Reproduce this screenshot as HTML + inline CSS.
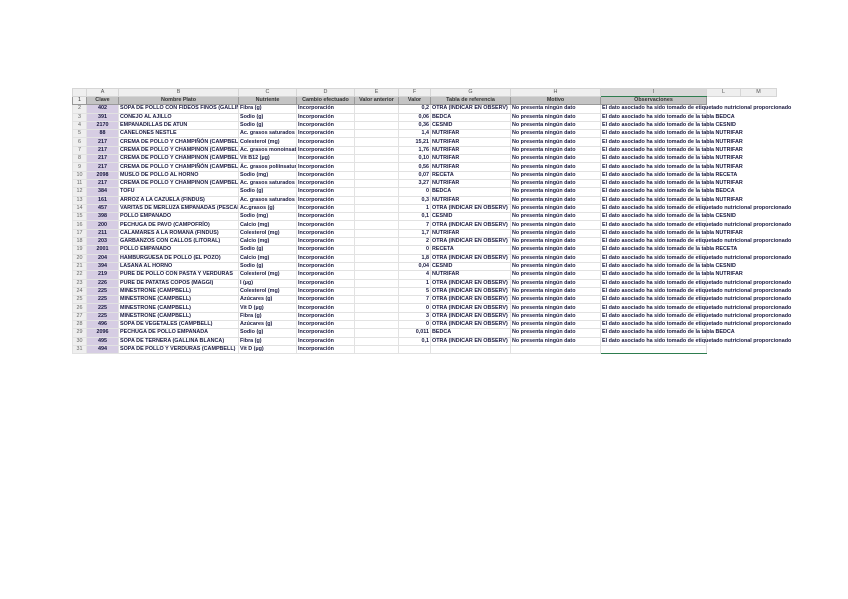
<!DOCTYPE html>
<html><head><meta charset="utf-8"><style>
html,body{margin:0;padding:0;background:#fff;width:848px;height:599px;overflow:hidden}
table{position:absolute;left:72px;top:88px;border-collapse:collapse;table-layout:fixed;font-family:"Liberation Sans",sans-serif;font-size:5.4px;color:#1a1a40;width:704px}
td{padding:0 1px;height:7.3px;line-height:7px;border:1px solid #e2e2e2;white-space:nowrap;overflow:hidden;font-weight:bold}
tr.l td{background:#efefef;color:#555;text-align:center;height:6px;font-weight:normal;border-color:#d6d6d6}
tr.h td{background:#c4c4c4;text-align:center;border-color:#999;color:#333}
td.n{background:#efefef;color:#666;text-align:center;font-weight:normal}
td.a{background:#d6cde3;text-align:center}
td.r{text-align:right}
tr.h td.sel{border-top:1px solid #2e7d4f}
tr.h td.n{background:#efefef}
tr.h td.x{background:#fff;border-color:#fff}
td.x{border-color:#fff}
tr:not(.l):not(.h) td:nth-child(10){overflow:visible}
</style></head><body>
<table>
<colgroup><col style="width:14px"><col style="width:32px"><col style="width:120px"><col style="width:58px"><col style="width:58px"><col style="width:44px"><col style="width:32px"><col style="width:80px"><col style="width:90px"><col style="width:106px"><col style="width:34px"><col style="width:36px"></colgroup>
<tr class="l"><td></td><td>A</td><td>B</td><td>C</td><td>D</td><td>E</td><td>F</td><td>G</td><td>H</td><td style="background:#d9d9d9;border-bottom:1px solid #2e7d4f">I</td><td>L</td><td>M</td></tr>
<tr class="h"><td class="n">1</td><td>Clave</td><td>Nombre Plato</td><td>Nutriente</td><td>Cambio efectuado</td><td>Valor anterior</td><td>Valor</td><td>Tabla de referencia</td><td>Motivo</td><td class="sel">Observaciones</td><td class="x"></td><td class="x"></td></tr>
<tr><td class="n">2</td><td class="a">402</td><td>SOPA DE POLLO CON FIDEOS FINOS (GALLINA BLANCA)</td><td>Fibra (g)</td><td>Incorporación</td><td></td><td class="r">0,2</td><td>OTRA (INDICAR EN OBSERV)</td><td>No presenta ningún dato</td><td>El dato asociado ha sido tomado de etiquetado nutricional proporcionado</td><td class="x"></td><td class="x"></td></tr>
<tr><td class="n">3</td><td class="a">391</td><td>CONEJO AL AJILLO</td><td>Sodio (g)</td><td>Incorporación</td><td></td><td class="r">0,06</td><td>BEDCA</td><td>No presenta ningún dato</td><td>El dato asociado ha sido tomado de la tabla BEDCA</td><td class="x"></td><td class="x"></td></tr>
<tr><td class="n">4</td><td class="a">2170</td><td>EMPANADILLAS DE ATÚN</td><td>Sodio (g)</td><td>Incorporación</td><td></td><td class="r">0,36</td><td>CESNID</td><td>No presenta ningún dato</td><td>El dato asociado ha sido tomado de la tabla CESNID</td><td class="x"></td><td class="x"></td></tr>
<tr><td class="n">5</td><td class="a">88</td><td>CANELONES NESTLÉ</td><td>Ác. grasos saturados (g)</td><td>Incorporación</td><td></td><td class="r">1,4</td><td>NUTRIFAR</td><td>No presenta ningún dato</td><td>El dato asociado ha sido tomado de la tabla NUTRIFAR</td><td class="x"></td><td class="x"></td></tr>
<tr><td class="n">6</td><td class="a">217</td><td>CREMA DE POLLO Y CHAMPIÑÓN (CAMPBELL)</td><td>Colesterol (mg)</td><td>Incorporación</td><td></td><td class="r">15,21</td><td>NUTRIFAR</td><td>No presenta ningún dato</td><td>El dato asociado ha sido tomado de la tabla NUTRIFAR</td><td class="x"></td><td class="x"></td></tr>
<tr><td class="n">7</td><td class="a">217</td><td>CREMA DE POLLO Y CHAMPIÑÓN (CAMPBELL)</td><td>Ác. grasos monoinsaturados</td><td>Incorporación</td><td></td><td class="r">1,76</td><td>NUTRIFAR</td><td>No presenta ningún dato</td><td>El dato asociado ha sido tomado de la tabla NUTRIFAR</td><td class="x"></td><td class="x"></td></tr>
<tr><td class="n">8</td><td class="a">217</td><td>CREMA DE POLLO Y CHAMPIÑÓN (CAMPBELL)</td><td>Vit B12 (µg)</td><td>Incorporación</td><td></td><td class="r">0,10</td><td>NUTRIFAR</td><td>No presenta ningún dato</td><td>El dato asociado ha sido tomado de la tabla NUTRIFAR</td><td class="x"></td><td class="x"></td></tr>
<tr><td class="n">9</td><td class="a">217</td><td>CREMA DE POLLO Y CHAMPIÑÓN (CAMPBELL)</td><td>Ác. grasos poliinsaturados</td><td>Incorporación</td><td></td><td class="r">0,56</td><td>NUTRIFAR</td><td>No presenta ningún dato</td><td>El dato asociado ha sido tomado de la tabla NUTRIFAR</td><td class="x"></td><td class="x"></td></tr>
<tr><td class="n">10</td><td class="a">2098</td><td>MUSLO DE POLLO AL HORNO</td><td>Sodio (mg)</td><td>Incorporación</td><td></td><td class="r">0,07</td><td>RECETA</td><td>No presenta ningún dato</td><td>El dato asociado ha sido tomado de la tabla RECETA</td><td class="x"></td><td class="x"></td></tr>
<tr><td class="n">11</td><td class="a">217</td><td>CREMA DE POLLO Y CHAMPIÑÓN (CAMPBELL)</td><td>Ác. grasos saturados (g)</td><td>Incorporación</td><td></td><td class="r">3,27</td><td>NUTRIFAR</td><td>No presenta ningún dato</td><td>El dato asociado ha sido tomado de la tabla NUTRIFAR</td><td class="x"></td><td class="x"></td></tr>
<tr><td class="n">12</td><td class="a">384</td><td>TOFU</td><td>Sodio (g)</td><td>Incorporación</td><td></td><td class="r">0</td><td>BEDCA</td><td>No presenta ningún dato</td><td>El dato asociado ha sido tomado de la tabla BEDCA</td><td class="x"></td><td class="x"></td></tr>
<tr><td class="n">13</td><td class="a">161</td><td>ARROZ A LA CAZUELA (FINDUS)</td><td>Ác. grasos saturados (g)</td><td>Incorporación</td><td></td><td class="r">0,3</td><td>NUTRIFAR</td><td>No presenta ningún dato</td><td>El dato asociado ha sido tomado de la tabla NUTRIFAR</td><td class="x"></td><td class="x"></td></tr>
<tr><td class="n">14</td><td class="a">457</td><td>VARITAS DE MERLUZA EMPANADAS (PESCANOVA)</td><td>Ác.grasos (g)</td><td>Incorporación</td><td></td><td class="r">1</td><td>OTRA (INDICAR EN OBSERV)</td><td>No presenta ningún dato</td><td>El dato asociado ha sido tomado de etiquetado nutricional proporcionado</td><td class="x"></td><td class="x"></td></tr>
<tr><td class="n">15</td><td class="a">398</td><td>POLLO EMPANADO</td><td>Sodio (mg)</td><td>Incorporación</td><td></td><td class="r">0,1</td><td>CESNID</td><td>No presenta ningún dato</td><td>El dato asociado ha sido tomado de la tabla CESNID</td><td class="x"></td><td class="x"></td></tr>
<tr><td class="n">16</td><td class="a">200</td><td>PECHUGA DE PAVO (CAMPOFRÍO)</td><td>Calcio (mg)</td><td>Incorporación</td><td></td><td class="r">7</td><td>OTRA (INDICAR EN OBSERV)</td><td>No presenta ningún dato</td><td>El dato asociado ha sido tomado de etiquetado nutricional proporcionado</td><td class="x"></td><td class="x"></td></tr>
<tr><td class="n">17</td><td class="a">211</td><td>CALAMARES A LA ROMANA (FINDUS)</td><td>Colesterol (mg)</td><td>Incorporación</td><td></td><td class="r">1,7</td><td>NUTRIFAR</td><td>No presenta ningún dato</td><td>El dato asociado ha sido tomado de la tabla NUTRIFAR</td><td class="x"></td><td class="x"></td></tr>
<tr><td class="n">18</td><td class="a">203</td><td>GARBANZOS CON CALLOS (LITORAL)</td><td>Calcio (mg)</td><td>Incorporación</td><td></td><td class="r">2</td><td>OTRA (INDICAR EN OBSERV)</td><td>No presenta ningún dato</td><td>El dato asociado ha sido tomado de etiquetado nutricional proporcionado</td><td class="x"></td><td class="x"></td></tr>
<tr><td class="n">19</td><td class="a">2001</td><td>POLLO EMPANADO</td><td>Sodio (g)</td><td>Incorporación</td><td></td><td class="r">0</td><td>RECETA</td><td>No presenta ningún dato</td><td>El dato asociado ha sido tomado de la tabla RECETA</td><td class="x"></td><td class="x"></td></tr>
<tr><td class="n">20</td><td class="a">204</td><td>HAMBURGUESA DE POLLO (EL POZO)</td><td>Calcio (mg)</td><td>Incorporación</td><td></td><td class="r">1,8</td><td>OTRA (INDICAR EN OBSERV)</td><td>No presenta ningún dato</td><td>El dato asociado ha sido tomado de etiquetado nutricional proporcionado</td><td class="x"></td><td class="x"></td></tr>
<tr><td class="n">21</td><td class="a">394</td><td>LASAÑA AL HORNO</td><td>Sodio (g)</td><td>Incorporación</td><td></td><td class="r">0,04</td><td>CESNID</td><td>No presenta ningún dato</td><td>El dato asociado ha sido tomado de la tabla CESNID</td><td class="x"></td><td class="x"></td></tr>
<tr><td class="n">22</td><td class="a">219</td><td>PURÉ DE POLLO CON PASTA Y VERDURAS</td><td>Colesterol (mg)</td><td>Incorporación</td><td></td><td class="r">4</td><td>NUTRIFAR</td><td>No presenta ningún dato</td><td>El dato asociado ha sido tomado de la tabla NUTRIFAR</td><td class="x"></td><td class="x"></td></tr>
<tr><td class="n">23</td><td class="a">226</td><td>PURÉ DE PATATAS COPOS (MAGGI)</td><td>I (µg)</td><td>Incorporación</td><td></td><td class="r">1</td><td>OTRA (INDICAR EN OBSERV)</td><td>No presenta ningún dato</td><td>El dato asociado ha sido tomado de etiquetado nutricional proporcionado</td><td class="x"></td><td class="x"></td></tr>
<tr><td class="n">24</td><td class="a">225</td><td>MINESTRONE (CAMPBELL)</td><td>Colesterol (mg)</td><td>Incorporación</td><td></td><td class="r">5</td><td>OTRA (INDICAR EN OBSERV)</td><td>No presenta ningún dato</td><td>El dato asociado ha sido tomado de etiquetado nutricional proporcionado</td><td class="x"></td><td class="x"></td></tr>
<tr><td class="n">25</td><td class="a">225</td><td>MINESTRONE (CAMPBELL)</td><td>Azúcares (g)</td><td>Incorporación</td><td></td><td class="r">7</td><td>OTRA (INDICAR EN OBSERV)</td><td>No presenta ningún dato</td><td>El dato asociado ha sido tomado de etiquetado nutricional proporcionado</td><td class="x"></td><td class="x"></td></tr>
<tr><td class="n">26</td><td class="a">225</td><td>MINESTRONE (CAMPBELL)</td><td>Vit D (µg)</td><td>Incorporación</td><td></td><td class="r">0</td><td>OTRA (INDICAR EN OBSERV)</td><td>No presenta ningún dato</td><td>El dato asociado ha sido tomado de etiquetado nutricional proporcionado</td><td class="x"></td><td class="x"></td></tr>
<tr><td class="n">27</td><td class="a">225</td><td>MINESTRONE (CAMPBELL)</td><td>Fibra (g)</td><td>Incorporación</td><td></td><td class="r">3</td><td>OTRA (INDICAR EN OBSERV)</td><td>No presenta ningún dato</td><td>El dato asociado ha sido tomado de etiquetado nutricional proporcionado</td><td class="x"></td><td class="x"></td></tr>
<tr><td class="n">28</td><td class="a">496</td><td>SOPA DE VEGETALES (CAMPBELL)</td><td>Azúcares (g)</td><td>Incorporación</td><td></td><td class="r">0</td><td>OTRA (INDICAR EN OBSERV)</td><td>No presenta ningún dato</td><td>El dato asociado ha sido tomado de etiquetado nutricional proporcionado</td><td class="x"></td><td class="x"></td></tr>
<tr><td class="n">29</td><td class="a">2096</td><td>PECHUGA DE POLLO EMPANADA</td><td>Sodio (g)</td><td>Incorporación</td><td></td><td class="r">0,011</td><td>BEDCA</td><td>No presenta ningún dato</td><td>El dato asociado ha sido tomado de la tabla BEDCA</td><td class="x"></td><td class="x"></td></tr>
<tr><td class="n">30</td><td class="a">495</td><td>SOPA DE TERNERA (GALLINA BLANCA)</td><td>Fibra (g)</td><td>Incorporación</td><td></td><td class="r">0,1</td><td>OTRA (INDICAR EN OBSERV)</td><td>No presenta ningún dato</td><td>El dato asociado ha sido tomado de etiquetado nutricional proporcionado</td><td class="x"></td><td class="x"></td></tr>
<tr><td class="n">31</td><td class="a">494</td><td>SOPA DE POLLO Y VERDURAS (CAMPBELL)</td><td>Vit D (µg)</td><td>Incorporación</td><td></td><td class="r"></td><td></td><td></td><td style="border-bottom:1px solid #2e7d4f"></td><td class="x"></td><td class="x"></td></tr>
</table>
</body></html>
